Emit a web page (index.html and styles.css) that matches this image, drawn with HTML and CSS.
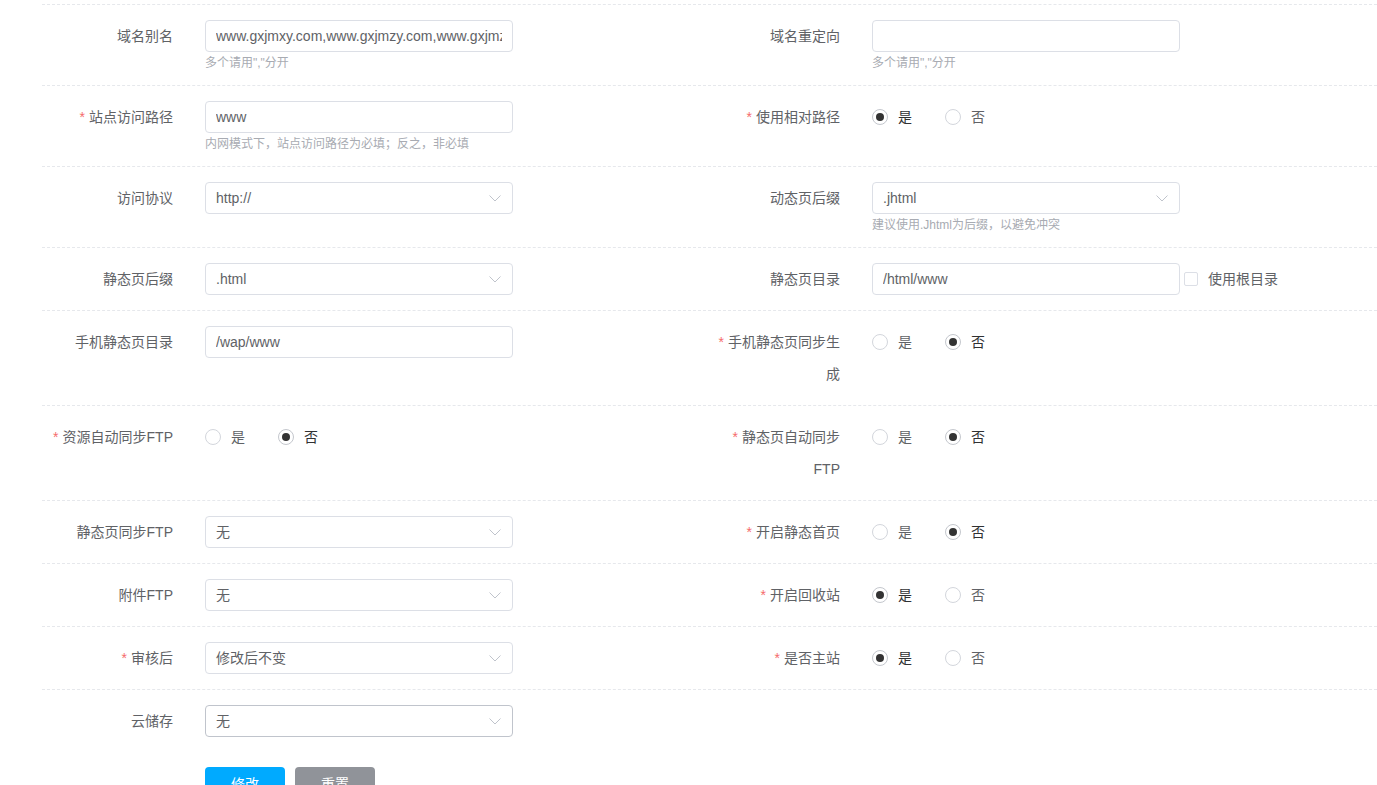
FILE: index.html
```html
<!DOCTYPE html>
<html lang="zh-CN">
<head>
  <meta charset="UTF-8">
  <title>站点设置</title>
  <link rel="stylesheet" href="styles.css">
</head>
<body>

<div class="site-form">

  <div class="form-row">
    <div class="form-item">
      <label class="item-label">域名别名</label>
      <div class="item-content">
        <input class="text-input" type="text" value="www.gxjmxy.com,www.gxjmzy.com,www.gxjmzy.com">
        <div class="tip">多个请用","分开</div>
      </div>
    </div>
    <div class="form-item">
      <label class="item-label">域名重定向</label>
      <div class="item-content">
        <input class="text-input" type="text" value="">
        <div class="tip">多个请用","分开</div>
      </div>
    </div>
  </div>

  <div class="form-row">
    <div class="form-item">
      <label class="item-label required">站点访问路径</label>
      <div class="item-content">
        <input class="text-input" type="text" value="www">
        <div class="tip">内网模式下，站点访问路径为必填；反之，非必填</div>
      </div>
    </div>
    <div class="form-item">
      <label class="item-label required">使用相对路径</label>
      <div class="item-content">
        <div class="radio-group">
          <span class="radio checked"><span class="radio-dot"></span><span class="radio-text">是</span></span>
          <span class="radio"><span class="radio-dot"></span><span class="radio-text">否</span></span>
        </div>
      </div>
    </div>
  </div>

  <div class="form-row">
    <div class="form-item">
      <label class="item-label">访问协议</label>
      <div class="item-content">
        <div class="select">
          <span>http://</span>
          <svg class="arrow" width="12" height="7" viewBox="0 0 12 7"><polyline points="0.5,0.5 6,6 11.5,0.5" fill="none" stroke="#c0c4cc" stroke-width="1"/></svg>
        </div>
      </div>
    </div>
    <div class="form-item">
      <label class="item-label">动态页后缀</label>
      <div class="item-content">
        <div class="select">
          <span>.jhtml</span>
          <svg class="arrow" width="12" height="7" viewBox="0 0 12 7"><polyline points="0.5,0.5 6,6 11.5,0.5" fill="none" stroke="#c0c4cc" stroke-width="1"/></svg>
        </div>
        <div class="tip">建议使用.Jhtml为后缀，以避免冲突</div>
      </div>
    </div>
  </div>

  <div class="form-row">
    <div class="form-item">
      <label class="item-label">静态页后缀</label>
      <div class="item-content">
        <div class="select">
          <span>.html</span>
          <svg class="arrow" width="12" height="7" viewBox="0 0 12 7"><polyline points="0.5,0.5 6,6 11.5,0.5" fill="none" stroke="#c0c4cc" stroke-width="1"/></svg>
        </div>
      </div>
    </div>
    <div class="form-item">
      <label class="item-label">静态页目录</label>
      <div class="item-content inline">
        <input class="text-input" type="text" value="/html/www">
        <span class="checkbox"><span class="checkbox-box"></span><span class="checkbox-text">使用根目录</span></span>
      </div>
    </div>
  </div>

  <div class="form-row">
    <div class="form-item">
      <label class="item-label">手机静态页目录</label>
      <div class="item-content">
        <input class="text-input" type="text" value="/wap/www">
      </div>
    </div>
    <div class="form-item">
      <label class="item-label required">手机静态页同步生成</label>
      <div class="item-content">
        <div class="radio-group">
          <span class="radio"><span class="radio-dot"></span><span class="radio-text">是</span></span>
          <span class="radio checked"><span class="radio-dot"></span><span class="radio-text">否</span></span>
        </div>
      </div>
    </div>
  </div>

  <div class="form-row">
    <div class="form-item">
      <label class="item-label required">资源自动同步FTP</label>
      <div class="item-content">
        <div class="radio-group">
          <span class="radio"><span class="radio-dot"></span><span class="radio-text">是</span></span>
          <span class="radio checked"><span class="radio-dot"></span><span class="radio-text">否</span></span>
        </div>
      </div>
    </div>
    <div class="form-item">
      <label class="item-label required">静态页自动同步FTP</label>
      <div class="item-content">
        <div class="radio-group">
          <span class="radio"><span class="radio-dot"></span><span class="radio-text">是</span></span>
          <span class="radio checked"><span class="radio-dot"></span><span class="radio-text">否</span></span>
        </div>
      </div>
    </div>
  </div>

  <div class="form-row">
    <div class="form-item">
      <label class="item-label">静态页同步FTP</label>
      <div class="item-content">
        <div class="select">
          <span>无</span>
          <svg class="arrow" width="12" height="7" viewBox="0 0 12 7"><polyline points="0.5,0.5 6,6 11.5,0.5" fill="none" stroke="#c0c4cc" stroke-width="1"/></svg>
        </div>
      </div>
    </div>
    <div class="form-item">
      <label class="item-label required">开启静态首页</label>
      <div class="item-content">
        <div class="radio-group">
          <span class="radio"><span class="radio-dot"></span><span class="radio-text">是</span></span>
          <span class="radio checked"><span class="radio-dot"></span><span class="radio-text">否</span></span>
        </div>
      </div>
    </div>
  </div>

  <div class="form-row">
    <div class="form-item">
      <label class="item-label">附件FTP</label>
      <div class="item-content">
        <div class="select">
          <span>无</span>
          <svg class="arrow" width="12" height="7" viewBox="0 0 12 7"><polyline points="0.5,0.5 6,6 11.5,0.5" fill="none" stroke="#c0c4cc" stroke-width="1"/></svg>
        </div>
      </div>
    </div>
    <div class="form-item">
      <label class="item-label required">开启回收站</label>
      <div class="item-content">
        <div class="radio-group">
          <span class="radio checked"><span class="radio-dot"></span><span class="radio-text">是</span></span>
          <span class="radio"><span class="radio-dot"></span><span class="radio-text">否</span></span>
        </div>
      </div>
    </div>
  </div>

  <div class="form-row">
    <div class="form-item">
      <label class="item-label required">审核后</label>
      <div class="item-content">
        <div class="select">
          <span>修改后不变</span>
          <svg class="arrow" width="12" height="7" viewBox="0 0 12 7"><polyline points="0.5,0.5 6,6 11.5,0.5" fill="none" stroke="#c0c4cc" stroke-width="1"/></svg>
        </div>
      </div>
    </div>
    <div class="form-item">
      <label class="item-label required">是否主站</label>
      <div class="item-content">
        <div class="radio-group">
          <span class="radio checked"><span class="radio-dot"></span><span class="radio-text">是</span></span>
          <span class="radio"><span class="radio-dot"></span><span class="radio-text">否</span></span>
        </div>
      </div>
    </div>
  </div>

  <div class="form-row last">
    <div class="form-item">
      <label class="item-label">云储存</label>
      <div class="item-content">
        <div class="select hover">
          <span>无</span>
          <svg class="arrow" width="12" height="7" viewBox="0 0 12 7"><polyline points="0.5,0.5 6,6 11.5,0.5" fill="none" stroke="#c0c4cc" stroke-width="1"/></svg>
        </div>
      </div>
    </div>
    <div class="form-item"></div>
  </div>

  <div class="form-actions">
    <button class="btn btn-primary" type="button">修改</button>
    <button class="btn btn-gray" type="button">重置</button>
  </div>

</div>

</body>
</html>
```

FILE: styles.css
```css
:root {
  --text: #606266;
  --text-strong: #303133;
  --tip: #a8abb2;
  --border: #dcdfe6;
  --line: #e6e8ec;
  --danger: #f56c6c;
  --primary: #00aaff;
  --gray: #909399;
}

html {
  overflow: hidden;
}

body {
  margin: 0;
  font-family: "Liberation Sans", "Noto Sans CJK SC", sans-serif;
  font-size: 14px;
  color: var(--text);
  background-color: #fff;
}

.site-form {
  margin: 4px 0 0 42px;
  border-top: 1px dashed var(--line);
}

/* Rows */
.form-row {
  display: grid;
  grid-template-columns: 667px 1fr;
  border-bottom: 1px dashed var(--line);
}

.form-row.last {
  border-bottom: none;
}

.form-item {
  display: flex;
  align-items: flex-start;
  padding: 15px 0;
}

.item-label {
  flex-shrink: 0;
  width: 131px;
  margin-right: 32px;
  text-align: right;
  line-height: 32px;
  color: var(--text);
}

.item-label.required::before {
  content: "*";
  color: var(--danger);
  margin-right: 4px;
}

.item-content {
  line-height: 32px;
}

.item-content.inline {
  display: flex;
  align-items: center;
}

.tip {
  margin-top: 5px;
  font-size: 12px;
  line-height: 13px;
  color: var(--tip);
}

/* Inputs */
.text-input {
  display: block;
  box-sizing: border-box;
  width: 308px;
  height: 32px;
  padding: 0 10px;
  border: 1px solid var(--border);
  border-radius: 4px;
  font: inherit;
  color: var(--text);
  outline: none;
  background: #fff;
}

.select {
  box-sizing: border-box;
  width: 308px;
  height: 32px;
  padding: 0 11px 0 10px;
  border: 1px solid var(--border);
  border-radius: 4px;
  display: flex;
  align-items: center;
  justify-content: space-between;
  color: var(--text);
}

.select.hover {
  border-color: #c0c4cc;
}

.arrow {
  display: block;
}

/* Radios */
.radio-group {
  display: flex;
  align-items: center;
  height: 32px;
}

.radio {
  display: flex;
  align-items: center;
  margin-right: 33px;
}

.radio-dot {
  box-sizing: border-box;
  width: 16px;
  height: 16px;
  border: 1px solid #d3d6dc;
  border-radius: 50%;
  display: flex;
  align-items: center;
  justify-content: center;
}

.radio.checked .radio-dot {
  border-color: #c4c7cd;
}

.radio.checked .radio-dot::after {
  content: "";
  width: 8px;
  height: 8px;
  border-radius: 50%;
  background-color: #333;
}

.radio-text {
  margin-left: 10px;
  color: var(--text);
}

.radio.checked .radio-text {
  color: var(--text-strong);
}

/* Checkbox */
.checkbox {
  display: flex;
  align-items: center;
  margin-left: 4px;
}

.checkbox-box {
  box-sizing: border-box;
  width: 14px;
  height: 14px;
  border: 1px solid var(--border);
  border-radius: 2px;
}

.checkbox-text {
  margin-left: 10px;
  color: var(--text);
}

/* Buttons */
.form-actions {
  display: flex;
  gap: 10px;
  padding-left: 163px;
  margin-top: 15px;
}

.btn {
  width: 80px;
  height: 32px;
  border: none;
  border-radius: 4px;
  color: #fff;
  font: inherit;
  cursor: pointer;
}

.btn-primary {
  background-color: var(--primary);
}

.btn-gray {
  background-color: var(--gray);
}
```
